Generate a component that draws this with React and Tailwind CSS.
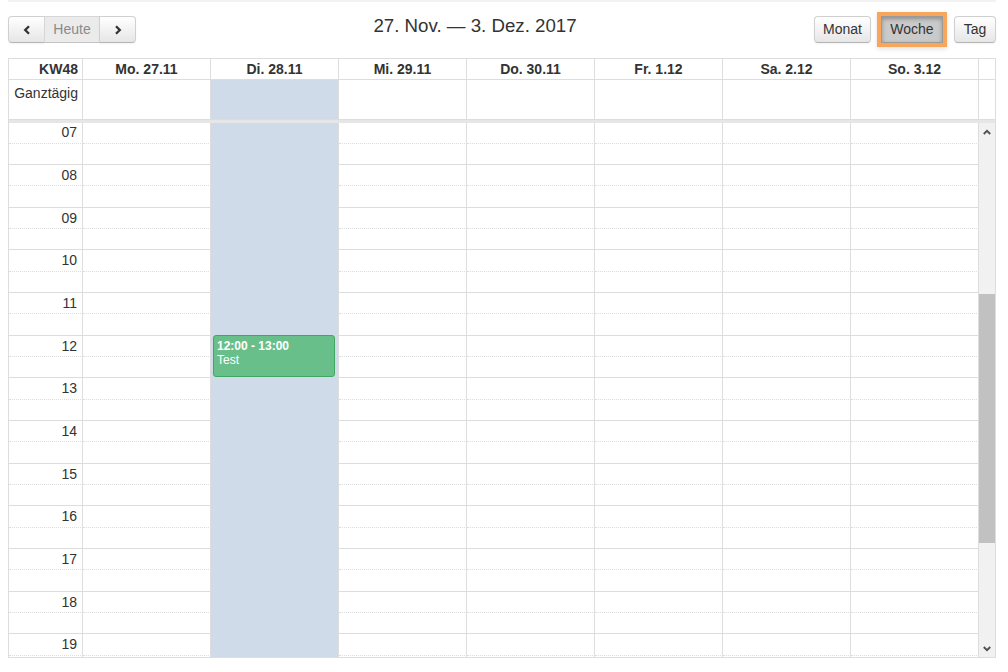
import React from "react";

const days = ["Mo. 27.11", "Di. 28.11", "Mi. 29.11", "Do. 30.11", "Fr. 1.12", "Sa. 2.12", "So. 3.12"];
const HL = 1;

function Chevron({ dir }) {
  return (
    <svg width="8" height="10" viewBox="0 0 8 10">
      <polyline
        points={dir === "left" ? "6,1.2 2.2,5 6,8.8" : "2,1.2 5.8,5 2,8.8"}
        fill="none"
        stroke="#333"
        strokeWidth="2.3"
      />
    </svg>
  );
}

function ScrollArrow({ dir }) {
  return (
    <svg width="8" height="6" viewBox="0 0 8 6">
      <polyline
        points={dir === "up" ? "0.8,5 4,1.8 7.2,5" : "0.8,1 4,4.2 7.2,1"}
        fill="none"
        stroke="#505050"
        strokeWidth="1.9"
      />
    </svg>
  );
}

const btn =
  "h-[27px] border border-[#d0d0d0] border-b-[#b5b5b5] bg-linear-to-b from-[#ffffff] to-[#e6e6e6] text-[#333] text-[14px] leading-[25px] shadow-[0_1px_2px_rgba(0,0,0,0.05)] flex items-center justify-center";

function BodyRow({ k }) {
  const isHour = k % 2 === 0;
  const h = k % 3 === 0 ? "h-[22px]" : "h-[21px]";
  const top = isHour
    ? "border-t border-t-[#ddd]"
    : "border-t border-t-[#ddd] [border-top-style:dotted]";
  const hour = 7 + k / 2;
  return (
    <div className={`flex ${h}`}>
      <div
        className={`w-[74px] shrink-0 border-r border-r-[#ddd] ${top} text-right pr-[5px] text-[14px] leading-[20px] text-[#333]`}
      >
        {isHour ? String(hour).padStart(2, "0") : ""}
      </div>
      {days.map((d, i) =>
        i === HL ? (
          <div
            key={d}
            className="relative w-[128px] shrink-0 border-r border-r-[#ddd] border-t border-t-[#cfdbe9] bg-[#cfdbe9]"
          >
            {k === 10 && (
              <div className="absolute top-[-1px] left-[2px] right-[3px] h-[42px] z-10 rounded-[3px] border border-[#3fa862] bg-[#69bf8a] text-white text-[12px] leading-[14px] pl-[3px] pt-[3px]">
                <div className="font-bold">12:00 - 13:00</div>
                <div>Test</div>
              </div>
            )}
          </div>
        ) : (
          <div key={d} className={`w-[128px] shrink-0 border-r border-r-[#ddd] ${top}`} />
        )
      )}
    </div>
  );
}

export default function App() {
  return (
    <div className="w-[1008px] h-[672px] bg-white font-['Liberation_Sans',Arial,sans-serif] text-[#333] overflow-hidden">
      <div className="ml-[8px] w-[988px] h-[2px] bg-[#f2f2f2]" />

      {/* toolbar */}
      <div className="ml-[8px] w-[988px] mt-[14px] flex items-start">
        <div className="flex">
          <div className={`${btn} w-[37px] rounded-l-[4px]`}>
            <Chevron dir="left" />
          </div>
          <div className="h-[27px] w-[56px] -ml-[1px] border border-[#d6d6d6] border-b-[#c4c4c4] bg-[#ebebeb] text-[#8a8a8a] text-[14px] flex items-center justify-center">
            Heute
          </div>
          <div className={`${btn} w-[37px] -ml-[1px] rounded-r-[4px]`}>
            <Chevron dir="right" />
          </div>
        </div>
        <div className="flex-1 text-center text-[18.7px] leading-[22px] -mt-[1px] text-[#333]">
          27. Nov. — 3. Dez. 2017
        </div>
        <div className="flex">
          <div className={`${btn} w-[57px] rounded-[4px]`}>Monat</div>
          <div className="ml-[10px] w-[62px] h-[27px] border border-[#9a9a9a] bg-[#cacaca] text-[#333] text-[14px] flex items-center justify-center rounded-none shadow-[inset_0_2px_4px_rgba(0,0,0,0.3),0_0_0_4px_#f6a75c,0_2px_5px_4px_rgba(0,0,0,0.12)]">
            Woche
          </div>
          <div className={`${btn} ml-[11px] w-[42px] rounded-[4px]`}>Tag</div>
        </div>
      </div>

      {/* calendar */}
      <div className="ml-[8px] w-[988px] mt-[15px] border border-[#ddd]">
        {/* header */}
        <div className="flex h-[21px] border-b border-b-[#ddd] text-[14px] leading-[20px] font-bold text-[#333]">
          <div className="w-[74px] shrink-0 border-r border-r-[#ddd] text-right pr-[4px]">KW48</div>
          {days.map((d) => (
            <div key={d} className="w-[128px] shrink-0 border-r border-r-[#ddd] text-center">
              {d}
            </div>
          ))}
          <div className="w-[16px] shrink-0" />
        </div>

        {/* all-day row */}
        <div className="flex h-[40px] border-b border-b-[#ddd]">
          <div className="w-[74px] shrink-0 border-r border-r-[#ddd] text-right pr-[4px] pt-[3px] text-[14px] leading-[20px]">
            Ganztägig
          </div>
          {days.map((d, i) => (
            <div
              key={d}
              className={`w-[128px] shrink-0 border-r border-r-[#ddd] ${i === HL ? "bg-[#cfdbe9]" : ""}`}
            />
          ))}
          <div className="w-[16px] shrink-0" />
        </div>

        {/* divider */}
        <div className="h-[3px] bg-[#e6e6e6]" />

        {/* body */}
        <div className="flex h-[534px]">
          <div className="w-[970px] h-[534px] overflow-hidden">
            <div className="-mt-[2px]">
              {Array.from({ length: 26 }, (_, k) => (
                <BodyRow key={k} k={k} />
              ))}
            </div>
          </div>
          <div className="w-[16px] shrink-0 bg-[#f1f1f1] flex flex-col">
            <div className="h-[17px] flex items-center justify-center">
              <ScrollArrow dir="up" />
            </div>
            <div className="flex-1">
              <div className="mt-[154px] h-[249px] bg-[#c1c1c1]" />
            </div>
            <div className="h-[17px] flex items-center justify-center">
              <ScrollArrow dir="down" />
            </div>
          </div>
        </div>
      </div>
    </div>
  );
}
